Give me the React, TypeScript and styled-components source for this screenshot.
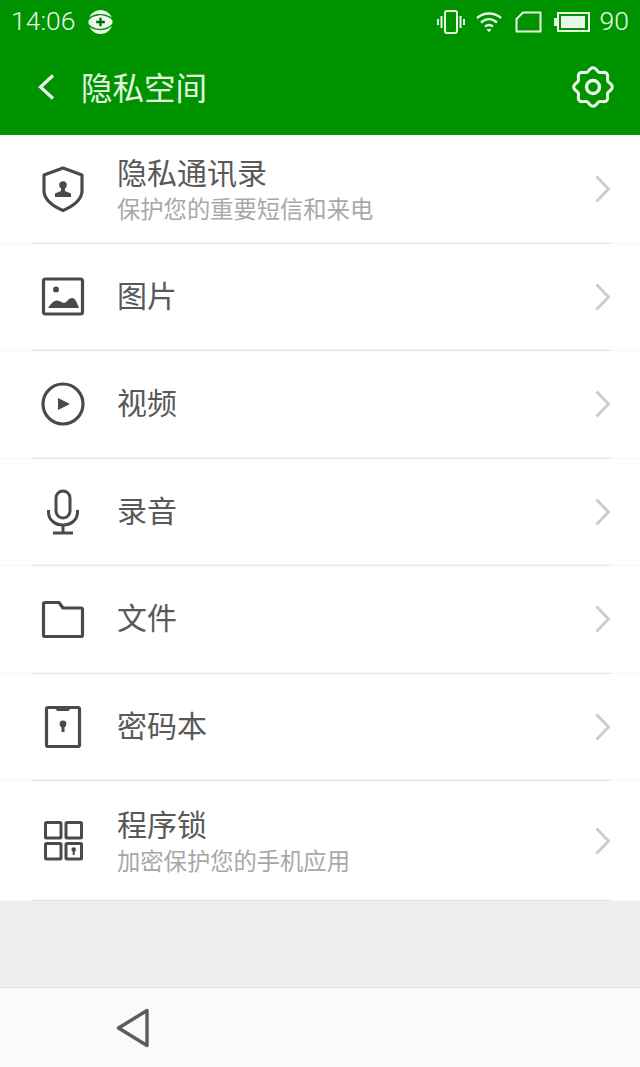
import React from "react";
import styled, { createGlobalStyle } from "styled-components";

const Global = createGlobalStyle`
  html, body { margin: 0; padding: 0; background: #eeeeee; }
  body { font-family: "Noto Sans CJK SC", "Noto Sans", sans-serif; }
  * { box-sizing: border-box; }
`;

const Page = styled.div`
  width: 640px;
  height: 1067px;
  display: flex;
  flex-direction: column;
  background: #eeeeee;
  overflow: hidden;
`;

const Header = styled.header`
  height: 135px;
  background: #009300;
  color: #e9f7e6;
  flex: none;
  display: flex;
  flex-direction: column;
`;

const StatusBar = styled.div`
  height: 43px;
  padding: 0 11px 0 11px;
  display: flex;
  align-items: center;
  justify-content: space-between;
`;

const StatusGroup = styled.div<{ $gap: number }>`
  display: flex;
  align-items: center;
  gap: ${(p) => p.$gap}px;
`;

const StatusText = styled.span`
  font-family: Roboto, "Noto Sans", sans-serif;
  font-weight: 300;
  font-size: 26.5px;
  line-height: 1;
`;

const Toolbar = styled.div`
  flex: 1;
  padding: 0 26px 4px 36px;
  display: flex;
  align-items: center;
`;

const Title = styled.h1`
  margin: 0 auto 0 25px;
  font-size: 31.5px;
  font-weight: 400;
  line-height: 1;
  color: #e6f6e2;
`;

const List = styled.div`
  background: #ffffff;
  flex: none;
  padding-top: 1px;
`;

const Row = styled.div<{ $h: number; $lift: number }>`
  height: ${(p) => p.$h}px;
  padding: 0 28px ${(p) => p.$lift}px 40px;
  position: relative;
  display: flex;
  align-items: center;
  &::before {
    content: "";
    position: absolute;
    left: 0;
    right: 0;
    bottom: 0;
    height: 1px;
    background: #f6f6f6;
  }
  &::after {
    content: "";
    position: absolute;
    left: 32px;
    right: 30px;
    bottom: 0;
    height: 1px;
    background: #e4e4e4;
    box-shadow: 0 -1px 0 #f6f6f6;
  }
`;

const IconBox = styled.div`
  width: 46px;
  height: 46px;
  flex: none;
  color: #4a4a4a;
  display: flex;
  align-items: center;
  justify-content: center;
`;

const Text = styled.div`
  flex: 1;
  margin-left: 31px;
  padding-bottom: 3px;
  display: flex;
  flex-direction: column;
`;

const RowTitle = styled.div`
  font-size: 30px;
  line-height: 38px;
  padding-bottom: 3px;
  font-weight: 400;
  color: #595959;
`;

const RowSub = styled.div`
  font-size: 23.3px;
  line-height: 30px;
  font-weight: 400;
  color: #a8a8a8;
`;

const Spacer = styled.div`
  flex: 1;
`;

const NavBar = styled.div`
  height: 80px;
  flex: none;
  background: #fafafa;
  border-top: 1px solid #e2e2e2;
  padding: 0 0 0 115px;
  display: flex;
  align-items: center;
`;

const Svg = ({ w, h, children }: { w: number; h: number; children: React.ReactNode }) => (
  <svg width={w} height={h} viewBox={`0 0 ${w} ${h}`} fill="none" stroke="currentColor" strokeWidth={3} strokeLinejoin="round" strokeLinecap="round">
    {children}
  </svg>
);

const Chevron = () => (
  <svg width="18" height="30" viewBox="0 0 18 30" fill="none" stroke="#cdcdcd" strokeWidth="3">
    <path d="M2.5 2.5 L14.5 15 L2.5 27.5" />
  </svg>
);

const Shield = () => (
  <Svg w={46} h={46}>
    <path d="M23 2 L42 9 V25 C42 33.5 33 40.500 23 44.500 C13 40.500 4 33.500 4 25 V9 Z" strokeWidth={3.2} />
    <circle cx="23" cy="19" r="3.8" fill="currentColor" stroke="none" />
    <path d="M21 21.500 h4 v3.500 l6 2.500 V31 H15 V27.500 L21 25 Z" fill="currentColor" stroke="none" />
  </Svg>
);

const Picture = () => (
  <Svg w={46} h={46}>
    <rect x="3.5" y="5" width="39" height="35" rx="2" strokeWidth={3.2} />
    <circle cx="16" cy="15.5" r="3" fill="currentColor" stroke="none" />
    <path d="M8 34 C11 29 14 26.5 17 26.5 C20 26.5 22 29 24 29 C26.5 29 28.5 24 32 24 C35.5 24 37 29 39 34 Z" fill="currentColor" stroke="none" />
  </Svg>
);

const Play = () => (
  <Svg w={46} h={46}>
    <circle cx="23" cy="23" r="20" strokeWidth={3.2} />
    <path d="M18 17 L30 23 L18 29 Z" fill="currentColor" stroke="none" />
  </Svg>
);

const Mic = () => (
  <Svg w={46} h={46}>
    <rect x="16" y="2" width="14" height="27" rx="7" strokeWidth={3} />
    <path d="M8.5 21 V23 C8.5 31 15 36 23 36 C31 36 37.5 31 37.5 23 V21" strokeLinecap="butt" />
    <path d="M23 36 V44 M13 44 H33" strokeLinecap="butt" />
  </Svg>
);

const Folder = () => (
  <Svg w={46} h={46}>
    <path d="M3.5 8 C3.5 7 4 6.500 5 6.500 H19 L23 12 H41 C42 12 42.500 12.500 42.500 13.500 V39 C42.500 40 42 40.500 41 40.500 H5 C4 40.500 3.500 40 3.500 39 Z" strokeWidth={3.2} />
  </Svg>
);

const Passbook = () => (
  <Svg w={46} h={46}>
    <rect x="6.5" y="3.5" width="33" height="39" rx="1.5" strokeWidth={3.2} />
    <path d="M16 4.500 H30 L28.500 6.500 H17.500 Z" fill="currentColor" strokeWidth={1} />
    <circle cx="23" cy="20" r="3.4" fill="currentColor" stroke="none" />
    <rect x="21.5" y="21" width="3" height="7" fill="currentColor" stroke="none" />
  </Svg>
);

const AppLock = () => (
  <Svg w={46} h={46}>
    <rect x="5.5" y="4.5" width="15.5" height="15.5" rx="1" strokeWidth={3} />
    <rect x="26" y="4.5" width="15.5" height="15.5" rx="1" strokeWidth={3} />
    <rect x="5.5" y="25.5" width="15.5" height="15.5" rx="1" strokeWidth={3} />
    <rect x="26" y="25.5" width="15.5" height="15.5" rx="1" strokeWidth={3} />
    <circle cx="33.7" cy="31.5" r="2.3" fill="currentColor" stroke="none" />
    <rect x="32.7" y="32" width="2" height="5" fill="currentColor" stroke="none" />
  </Svg>
);

const gearPath = (() => {
  const pts: string[] = [];
  for (let i = 0; i < 120; i++) {
    const a = (i / 120) * Math.PI * 2 - Math.PI / 2;
    const r = 17.6 + 1.7 * Math.cos(8 * (a + Math.PI / 2));
    pts.push(`${(21 + r * Math.cos(a)).toFixed(2)} ${(21 + r * Math.sin(a)).toFixed(2)}`);
  }
  return `M${pts.join(" L")} Z`;
})();

const rows = [
  { title: "隐私通讯录", sub: "保护您的重要短信和来电", icon: <Shield />, h: 108, lift: 2 },
  { title: "图片", icon: <Picture />, h: 107, lift: 2 },
  { title: "视频", icon: <Play />, h: 108, lift: 2 },
  { title: "录音", icon: <Mic />, h: 107, lift: 2 },
  { title: "文件", icon: <Folder />, h: 108, lift: 2 },
  { title: "密码本", icon: <Passbook />, h: 107, lift: 2 },
  { title: "程序锁", sub: "加密保护您的手机应用", icon: <AppLock />, h: 120, lift: 0 },
];

export default function App() {
  return (
    <Page>
      <Global />
      <Header>
        <StatusBar>
          <StatusGroup $gap={13}>
            <StatusText>14:06</StatusText>
            <svg width="25" height="24" viewBox="0 0 26 25">
              <circle cx="13" cy="12.500" r="12.500" fill="#eef8ec" />
              <path d="M0 10.500 C5 3.500 19 3 26 10 M0 15 C6 22 20 22 26 14.500" fill="none" stroke="#009300" strokeWidth="1.600" />
              <circle cx="13" cy="12.500" r="7" fill="#eef8ec" />
              <path d="M13 8 V17 M8.500 12.500 H17.500" stroke="#006a00" strokeWidth="2.400" />
            </svg>
          </StatusGroup>
          <StatusGroup $gap={12}>
            <svg width="28" height="26" viewBox="0 0 28 26" fill="none" stroke="currentColor" strokeWidth="2" style={{ marginRight: -2 }}>
              <rect x="8" y="2" width="12" height="22" rx="2" />
              <path d="M4.500 7 V19 M23.500 7 V19 M1 10 V16 M27 10 V16" />
            </svg>
            <svg width="28" height="24" viewBox="0 0 28 24" fill="none" stroke="currentColor" strokeWidth="2.400">
              <path d="M2 8 C9 2 19 2 26 8 M6 12.500 C11 8 17 8 22 12.500 M10 16.500 C12.500 14.500 15.500 14.500 18 16.500" />
              <path d="M11.500 19 L14 22.500 L16.500 19 Z" fill="currentColor" stroke="none" />
            </svg>
            <svg width="27" height="22" viewBox="0 0 27 22" fill="none" stroke="currentColor" strokeWidth="2">
              <path d="M8 1.500 H25.500 V20.500 H1.500 V8 Z" strokeLinejoin="round" />
            </svg>
            <svg width="36" height="22" viewBox="0 0 36 22" fill="none" stroke="currentColor" strokeWidth="2" style={{ marginRight: -2 }}>
              <rect x="4" y="2" width="31" height="18" />
              <rect x="0" y="7" width="3" height="8" fill="currentColor" stroke="none" />
              <rect x="7" y="5" width="24" height="12" fill="currentColor" stroke="none" />
            </svg>
            <StatusText>90</StatusText>
          </StatusGroup>
        </StatusBar>
        <Toolbar>
          <svg width="20" height="28" viewBox="0 0 20 28" fill="none" stroke="#eef8ec" strokeWidth="3.200">
            <path d="M17 2.500 L4.500 14 L17 25.500" />
          </svg>
          <Title>隐私空间</Title>
          <svg width="42" height="42" viewBox="0 0 42 42" fill="none" stroke="#eef8ec" strokeWidth="3" strokeLinejoin="round">
            <path d={gearPath} />
            <circle cx="21" cy="21" r="6.500" strokeWidth="3.400" />
          </svg>
        </Toolbar>
      </Header>
      <List>
        {rows.map((r) => (
          <Row key={r.title} $h={r.h} $lift={r.lift}>
            <IconBox>{r.icon}</IconBox>
            <Text>
              <RowTitle>{r.title}</RowTitle>
              {r.sub && <RowSub>{r.sub}</RowSub>}
            </Text>
            <Chevron />
          </Row>
        ))}
      </List>
      <Spacer />
      <NavBar>
        <svg width="36" height="40" viewBox="0 0 36 40" fill="none" stroke="#5c5c5c" strokeWidth="3.400" strokeLinejoin="round">
          <path d="M32 2.500 V37.500 L3.500 20 Z" />
        </svg>
      </NavBar>
    </Page>
  );
}
